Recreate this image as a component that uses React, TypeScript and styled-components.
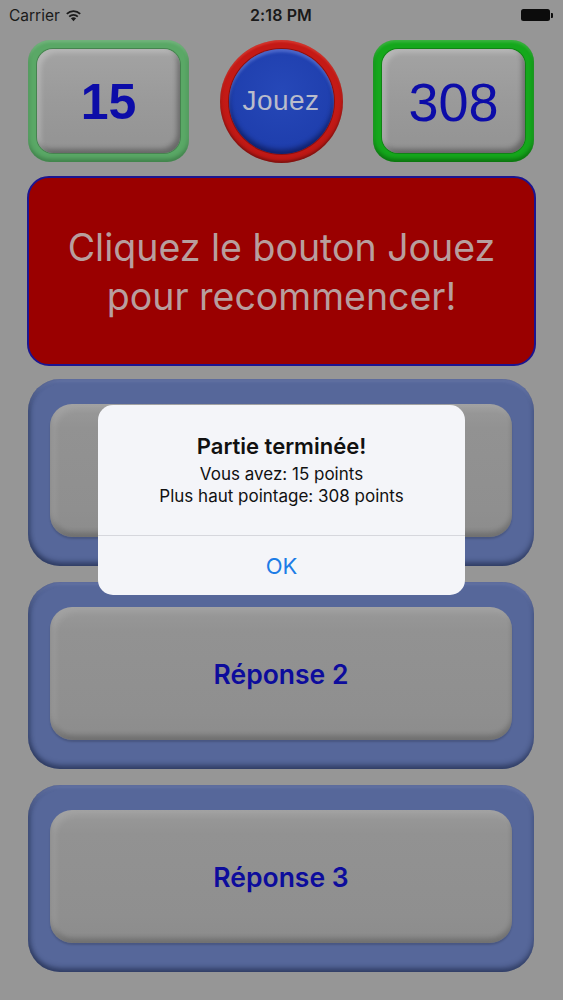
import React from "react";
import styled, { createGlobalStyle } from "styled-components";

const GlobalStyle = createGlobalStyle`
  html, body {
    margin: 0;
    padding: 0;
    background: #969696;
  }
  body {
    font-family: Inter, "Noto Sans", sans-serif;
  }
  * { box-sizing: border-box; }
`;

const Screen = styled.div`
  position: relative;
  width: 563px;
  height: 1000px;
  background: #969696;
  overflow: hidden;
`;

/* ---------- status bar ---------- */
const StatusBar = styled.div`
  height: 30px;
  display: grid;
  grid-template-columns: 1fr auto 1fr;
  align-items: center;
  padding: 0 10px 0 9px;
  color: #1a1a1a;
  font-family: Inter, sans-serif;
`;

const Carrier = styled.div`
  display: flex;
  align-items: center;
  gap: 5px;
  font-size: 15.5px;
`;

const Clock = styled.div`
  font-size: 16px;
  font-weight: 600;
  letter-spacing: 0.1px;
`;

const BatteryWrap = styled.div`
  justify-self: end;
  display: flex;
  align-items: center;
  gap: 1px;
`;

const BatteryBody = styled.div`
  width: 29px;
  height: 12px;
  border-radius: 2.5px;
  background: #0c0c0c;
`;

const BatteryNub = styled.div`
  width: 2px;
  height: 5px;
  border-radius: 0 1px 1px 0;
  background: #0c0c0c;
`;

/* ---------- game area ---------- */
const Board = styled.div`
  display: flex;
  flex-direction: column;
  padding: 9px 29px 0 28px;
`;

const TopRow = styled.div`
  display: flex;
  justify-content: space-between;
  align-items: center;
  height: 124px;
`;

const ScoreFrame = styled.div<{ $ring: string; $edge: string }>`
  width: 161px;
  height: 122px;
  border-radius: 22px;
  padding: 9px;
  background: ${(p) => p.$ring};
  box-shadow: inset 0 -3px 4px ${(p) => p.$edge}, inset 0 2px 3px rgba(255, 255, 255, 0.18);
  display: flex;
`;

const ScoreFace = styled.div<{ $weight: number; $size: number }>`
  flex: 1;
  border-radius: 16px;
  background: linear-gradient(180deg, #a3a3a3 0%, #9a9a9a 50%, #939393 100%);
  box-shadow: inset 4px 4px 5px rgba(255, 255, 255, 0.22), inset -3px -4px 5px rgba(0, 0, 0, 0.3),
    0 0 0 1px rgba(0, 0, 0, 0.22);
  display: flex;
  align-items: center;
  justify-content: center;
  font-family: "Liberation Sans", Arial, sans-serif;
  font-size: ${(p) => p.$size}px;
  font-weight: ${(p) => p.$weight};
  color: #0c0ca8;
  padding-top: 2px;
`;

const PlayRing = styled.div`
  width: 123px;
  height: 123px;
  border-radius: 50%;
  background: radial-gradient(circle at 50% 45%, #c41a16 60%, #a51210 100%);
  box-shadow: inset 0 -2px 3px rgba(0, 0, 0, 0.35), inset 0 2px 2px rgba(255, 120, 100, 0.3);
  display: flex;
  align-items: center;
  justify-content: center;
`;

const PlayButton = styled.div`
  width: 105px;
  height: 105px;
  border-radius: 50%;
  background: radial-gradient(circle at 50% 40%, #2648b8 0%, #1f3fae 65%, #18329a 100%);
  box-shadow: inset 0 3px 3px rgba(160, 180, 255, 0.35), inset 0 -4px 5px rgba(0, 0, 30, 0.45),
    0 0 0 1px rgba(60, 0, 0, 0.4);
  display: flex;
  align-items: center;
  justify-content: center;
  color: #b9bccb;
  font-family: "Liberation Sans", Arial, sans-serif;
  font-size: 28px;
  letter-spacing: 0.5px;
  padding-bottom: 1px;
`;

const Message = styled.div`
  margin: 13px -2px 0 -1px;
  height: 190px;
  border-radius: 22px;
  border: 2px solid #1c1590;
  background: #9a0000;
  display: flex;
  align-items: center;
  justify-content: center;
  text-align: center;
  color: #b89e9e;
  font-size: 37.5px;
  line-height: 49px;
  font-weight: 400;
  padding-top: 1px;
`;

const Answers = styled.div`
  display: flex;
  flex-direction: column;
  gap: 16px;
  margin-top: 13px;
`;

const AnswerFrame = styled.div`
  height: 187px;
  border-radius: 32px;
  background: #56679a;
  padding: 25px 22px 29px 22px;
  box-shadow: inset 0 -4px 5px rgba(20, 30, 60, 0.5), inset 0 3px 3px rgba(200, 210, 255, 0.15),
    inset 3px 0 4px rgba(20, 30, 60, 0.25);
  display: flex;
`;

const AnswerFace = styled.div`
  flex: 1;
  border-radius: 22px;
  background: linear-gradient(180deg, #999999 0%, #929292 18%, #8f8f8f 80%, #8c8c8c 100%);
  box-shadow: inset 5px 5px 6px rgba(255, 255, 255, 0.1), inset 0 -5px 5px rgba(0, 0, 0, 0.2),
    0 2px 2px rgba(0, 0, 0, 0.16);
  display: flex;
  align-items: center;
  justify-content: center;
  color: #0d0c9c;
  font-size: 26.5px;
  font-weight: 600;
`;

/* ---------- alert ---------- */
const Backdrop = styled.div`
  position: absolute;
  inset: 0;
  display: flex;
  align-items: center;
  justify-content: center;
`;

const Alert = styled.div`
  width: 367px;
  border-radius: 15px;
  background: #f4f5f9;
  overflow: hidden;
  display: flex;
  flex-direction: column;
`;

const AlertBody = styled.div`
  height: 130px;
  padding-top: 28px;
  display: flex;
  flex-direction: column;
  gap: 2px;
  align-items: center;
  text-align: center;
  color: #111;
`;

const AlertTitle = styled.div`
  font-size: 22px;
  font-weight: 600;
  line-height: 26px;
  margin-bottom: 3px;
`;

const AlertLine = styled.div`
  font-size: 17px;
  line-height: 20px;
`;

const AlertAction = styled.div`
  height: 60px;
  border-top: 1px solid #d6d7dd;
  display: flex;
  align-items: center;
  justify-content: center;
  color: #1c7ce6;
  font-size: 22px;
`;

const Wifi = () => (
  <svg width="17" height="13" viewBox="0 0 17 13" aria-hidden>
    <path d="M8.5 12.3 L5.9 9.3 A3.9 3.9 0 0 1 11.1 9.3 Z" fill="#1a1a1a" />
    <path d="M3.6 6.9 A7 7 0 0 1 13.4 6.9 L12.2 8.3 A5.2 5.2 0 0 0 4.8 8.3 Z" fill="#1a1a1a" />
    <path d="M1.2 4.2 A10.5 10.5 0 0 1 15.8 4.2 L14.6 5.6 A8.6 8.6 0 0 0 2.4 5.6 Z" fill="#1a1a1a" />
  </svg>
);

const answers = ["Réponse 1", "Réponse 2", "Réponse 3"];

export default function App() {
  return (
    <>
      <GlobalStyle />
      <Screen>
        <StatusBar>
          <Carrier>
            Carrier <Wifi />
          </Carrier>
          <Clock>2:18 PM</Clock>
          <BatteryWrap>
            <BatteryBody />
            <BatteryNub />
          </BatteryWrap>
        </StatusBar>

        <Board>
          <TopRow>
            <ScoreFrame $ring="#5aa866" $edge="rgba(30,80,40,0.45)">
              <ScoreFace $weight={700} $size={50}>15</ScoreFace>
            </ScoreFrame>
            <PlayRing>
              <PlayButton>Jouez</PlayButton>
            </PlayRing>
            <ScoreFrame $ring="#15a81c" $edge="rgba(0,60,0,0.5)">
              <ScoreFace $weight={400} $size={54}>308</ScoreFace>
            </ScoreFrame>
          </TopRow>

          <Message>
            Cliquez le bouton Jouez
            <br />
            pour recommencer!
          </Message>

          <Answers>
            {answers.map((a) => (
              <AnswerFrame key={a}>
                <AnswerFace>{a}</AnswerFace>
              </AnswerFrame>
            ))}
          </Answers>
        </Board>

        <Backdrop>
          <Alert role="alertdialog">
            <AlertBody>
              <AlertTitle>Partie terminée!</AlertTitle>
              <AlertLine>Vous avez: 15 points</AlertLine>
              <AlertLine>Plus haut pointage: 308 points</AlertLine>
            </AlertBody>
            <AlertAction>OK</AlertAction>
          </Alert>
        </Backdrop>
      </Screen>
    </>
  );
}
